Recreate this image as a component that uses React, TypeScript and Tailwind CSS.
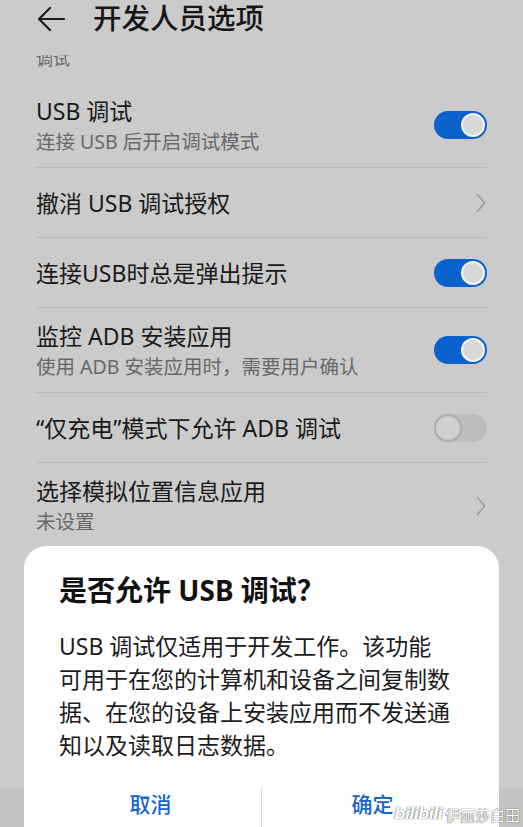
import React from 'react';

type Row = {
  title: string;
  sub?: string;
  kind: 'on' | 'off' | 'link';
};

const rows: Row[] = [
  { title: 'USB 调试', sub: '连接 USB 后开启调试模式', kind: 'on' },
  { title: '撤消 USB 调试授权', kind: 'link' },
  { title: '连接USB时总是弹出提示', kind: 'on' },
  { title: '监控 ADB 安装应用', sub: '使用 ADB 安装应用时，需要用户确认', kind: 'on' },
  { title: '“仅充电”模式下允许 ADB 调试', kind: 'off' },
  { title: '选择模拟位置信息应用', sub: '未设置', kind: 'link' },
];

function Toggle({ on }: { on: boolean }) {
  if (on) {
    return (
      <div className="flex h-[28px] w-[53px] items-center justify-end rounded-full bg-[#0b62cc] p-[2px]">
        <div className="h-[24px] w-[24px] rounded-full border-2 border-[#f4f4f4] bg-[#d8d8d8]" />
      </div>
    );
  }
  return (
    <div className="flex h-[28px] w-[53px] items-center justify-start rounded-full bg-[#bdbdbd] p-[1px]">
      <div className="h-[26px] w-[26px] rounded-full border border-[#b3b3b3] bg-[#d0d0d0] shadow-[0_0_2px_rgba(0,0,0,0.25)]" />
    </div>
  );
}

function Chevron() {
  return (
    <svg width="10" height="20" viewBox="0 0 10 20" className="mr-[1px]">
      <polyline points="1.5,1.5 8.5,10 1.5,18.5" fill="none" stroke="#9c9c9c" strokeWidth="1.6" strokeLinecap="round" strokeLinejoin="round" />
    </svg>
  );
}

function SettingRow({ row, last }: { row: Row; last: boolean }) {
  return (
    <div className={`mx-[36px] flex items-center justify-between ${last ? '' : 'border-b border-[#b9b9b9]'} ${row.sub ? 'h-[85px]' : 'h-[70px]'}`}>
      <div className="flex flex-col">
        <div className="text-[23px] leading-[30px] text-[#1a1a1a]">{row.title}</div>
        {row.sub && <div className="mt-[3px] text-[19.5px] leading-[26px] text-[#686868]">{row.sub}</div>}
      </div>
      {row.kind === 'link' ? <Chevron /> : <Toggle on={row.kind === 'on'} />}
    </div>
  );
}

export default function App() {
  return (
    <div className="relative h-[827px] w-[523px] overflow-hidden bg-[#cbcbcb] font-['Noto_Sans','Noto_Sans_CJK_SC',sans-serif]">
      <div className="flex h-[827px] flex-col">
        {/* header */}
        <div className="flex h-[55px] shrink-0 items-start">
          <div className="flex h-[37px] items-center">
            <svg width="30" height="26" viewBox="0 0 30 26" className="ml-[37px]">
              <path d="M27 13H3M13 2L2 13L13 24" fill="none" stroke="#1a1a1a" strokeWidth="2.2" strokeLinecap="round" strokeLinejoin="round" />
            </svg>
            <span className="ml-[26px] text-[28.5px] font-medium leading-[37px] text-[#161616]">开发人员选项</span>
          </div>
        </div>

        {/* section label, scrolled partly under the header */}
        <div className="flex h-[12px] shrink-0 items-end overflow-hidden pl-[36px]">
          <span className="text-[17px] leading-[17px] text-[#6a6a6a]">调试</span>
        </div>

        <div className="mt-[16px]">
          {rows.map((r, i) => (
            <SettingRow key={r.title} row={r} last={i === rows.length - 1} />
          ))}
        </div>

        {/* navigation bar strip */}
        <div className="mt-auto h-[39px] bg-[#c4c4c4]" />
      </div>

      {/* confirmation dialog */}
      <div className="absolute bottom-0 left-[24px] right-[24px] top-[546px] flex flex-col rounded-t-[22px] bg-white">
        <div className="pl-[35px] pt-[26px] text-[28px] font-bold leading-[36px] text-[#111111]">是否允许 USB 调试？</div>
        <p className="mt-[22px] box-content w-[394px] pl-[35px] text-[23px] leading-[33px] text-[#1c1c1c]">
          USB 调试仅适用于开发工作。该功能可用于在您的计算机和设备之间复制数据、在您的设备上安装应用而不发送通知以及读取日志数据。
        </p>
        <div className="mt-auto flex h-[40px] items-start px-[16px]">
          <div className="flex flex-1 justify-center pt-[2px] text-[21px] font-medium text-[#1766cc]">取消</div>
          <div className="h-[40px] w-px bg-[#dcdcdc]" />
          <div className="flex flex-1 justify-center pt-[2px] text-[21px] font-medium text-[#1766cc]">确定</div>
        </div>
      </div>

      {/* uploader watermark */}
      <div className="absolute bottom-[2px] right-[3px] flex items-end gap-[3px] text-white [text-shadow:0_0_1px_#555,0_0_1px_#555]">
        <span className="font-['DejaVu_Sans',sans-serif] text-[16px] font-bold italic leading-[22px] tracking-[-1px]">bilibili</span>
        <span className="font-['Noto_Sans_CJK_SC',sans-serif] text-[15px] leading-[20px]">伊丽莎白田</span>
      </div>
    </div>
  );
}
